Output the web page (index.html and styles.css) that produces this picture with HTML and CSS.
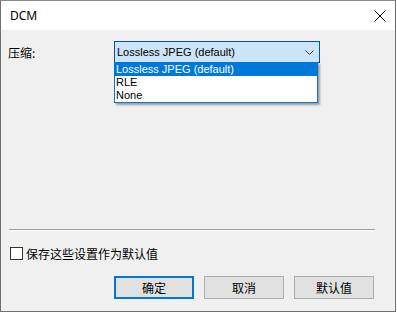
FILE: index.html
```html
<!DOCTYPE html>
<html lang="zh">
<head>
    <meta charset="UTF-8">
    <title>DCM</title>
    <link rel="stylesheet" href="styles.css">
</head>
<body>
    <div class="window">
        <div class="titlebar">
            <span class="title">DCM</span>
            <svg class="close" width="12" height="12" viewBox="0 0 12 12">
                <path d="M0.5 0.5 L11.5 11.5 M11.5 0.5 L0.5 11.5" stroke="#000" stroke-width="1" fill="none"/>
            </svg>
        </div>
        <div class="content">
            <div class="field">
                <label class="label">压缩:</label>
                <div class="combo-wrap">
                    <div class="combo">
                        <span>Lossless JPEG (default)</span>
                        <svg class="arrow" width="9" height="5" viewBox="0 0 9 5">
                            <path d="M0.5 0.5 L4.5 4.5 L8.5 0.5" stroke="#333" stroke-width="1" fill="none"/>
                        </svg>
                    </div>
                    <ul class="dropdown">
                        <li class="selected">Lossless JPEG (default)</li>
                        <li>RLE</li>
                        <li>None</li>
                    </ul>
                </div>
            </div>

            <div class="separator"></div>

            <div class="check-row">
                <span class="checkbox"></span>
                <span>保存这些设置作为默认值</span>
            </div>

            <div class="buttons">
                <button class="btn default">确定</button>
                <button class="btn">取消</button>
                <button class="btn">默认值</button>
            </div>
        </div>
    </div>
</body>
</html>
```
FILE: styles.css
```css
body {
    margin: 0;
    background: #fff;
    font-family: "Noto Sans", "Noto Sans CJK SC", sans-serif;
    font-size: 12px;
    color: #000;
}
.window {
    width: 394px;
    height: 310px;
    border: 1px solid #6f6f6f;
    border-top-color: #8a8a8a;
    background: #f0f0f0;
    display: flex;
    flex-direction: column;
}
.titlebar {
    height: 29px;
    background: #fff;
    display: flex;
    align-items: center;
    justify-content: space-between;
    padding: 0 9px 0 9px;
}
.title {
    font-size: 12px;
}
.content {
    padding: 11px 21px 0 7px;
}
.field {
    display: flex;
    align-items: center;
    height: 22px;
}
.label {
    width: 106px;
    font-family: "Noto Sans CJK SC", sans-serif;
}
.combo-wrap {
    position: relative;
}
.combo {
    width: 197px;
    height: 20px;
    border: 1px solid #005499;
    background: #cce4f7;
    display: flex;
    align-items: center;
    justify-content: space-between;
    padding: 0 5px 0 2px;
    font-family: "Liberation Sans", sans-serif;
    font-size: 11px;
}
.arrow {
    margin-top: 1px;
}
.dropdown {
    position: absolute;
    left: 0;
    top: 21px;
    width: 202px;
    margin: 0;
    padding: 0;
    list-style: none;
    border: 1px solid #0078d7;
    background: #fff;
    box-shadow: 2px 2px 2px rgba(0, 0, 0, 0.35);
    font-family: "Liberation Sans", sans-serif;
    font-size: 11px;
}
.dropdown li {
    height: 13px;
    line-height: 13px;
    padding-left: 1px;
}
.dropdown li.selected {
    background: #0078d7;
    color: #fff;
}
.separator {
    margin-top: 166px;
    height: 1px;
    width: 366px;
    margin-left: 1px;
    background: #a0a0a0;
    border-bottom: 1px solid #fff;
}
.check-row {
    margin-top: 16px;
    display: flex;
    align-items: center;
    height: 13px;
    margin-left: 2px;
    font-family: "Noto Sans CJK SC", sans-serif;
}
.checkbox {
    width: 11px;
    height: 11px;
    border: 1px solid #333;
    background: #fff;
    margin-right: 3px;
}
.buttons {
    margin-top: 16px;
    display: flex;
    justify-content: flex-end;
    gap: 10px;
}
.btn {
    width: 80px;
    height: 23px;
    padding: 0;
    border: 1px solid #adadad;
    background: #e1e1e1;
    font-family: "Noto Sans CJK SC", sans-serif;
    font-size: 12px;
    color: #000;
}
.btn.default {
    border: 2px solid #0078d7;
}
```
